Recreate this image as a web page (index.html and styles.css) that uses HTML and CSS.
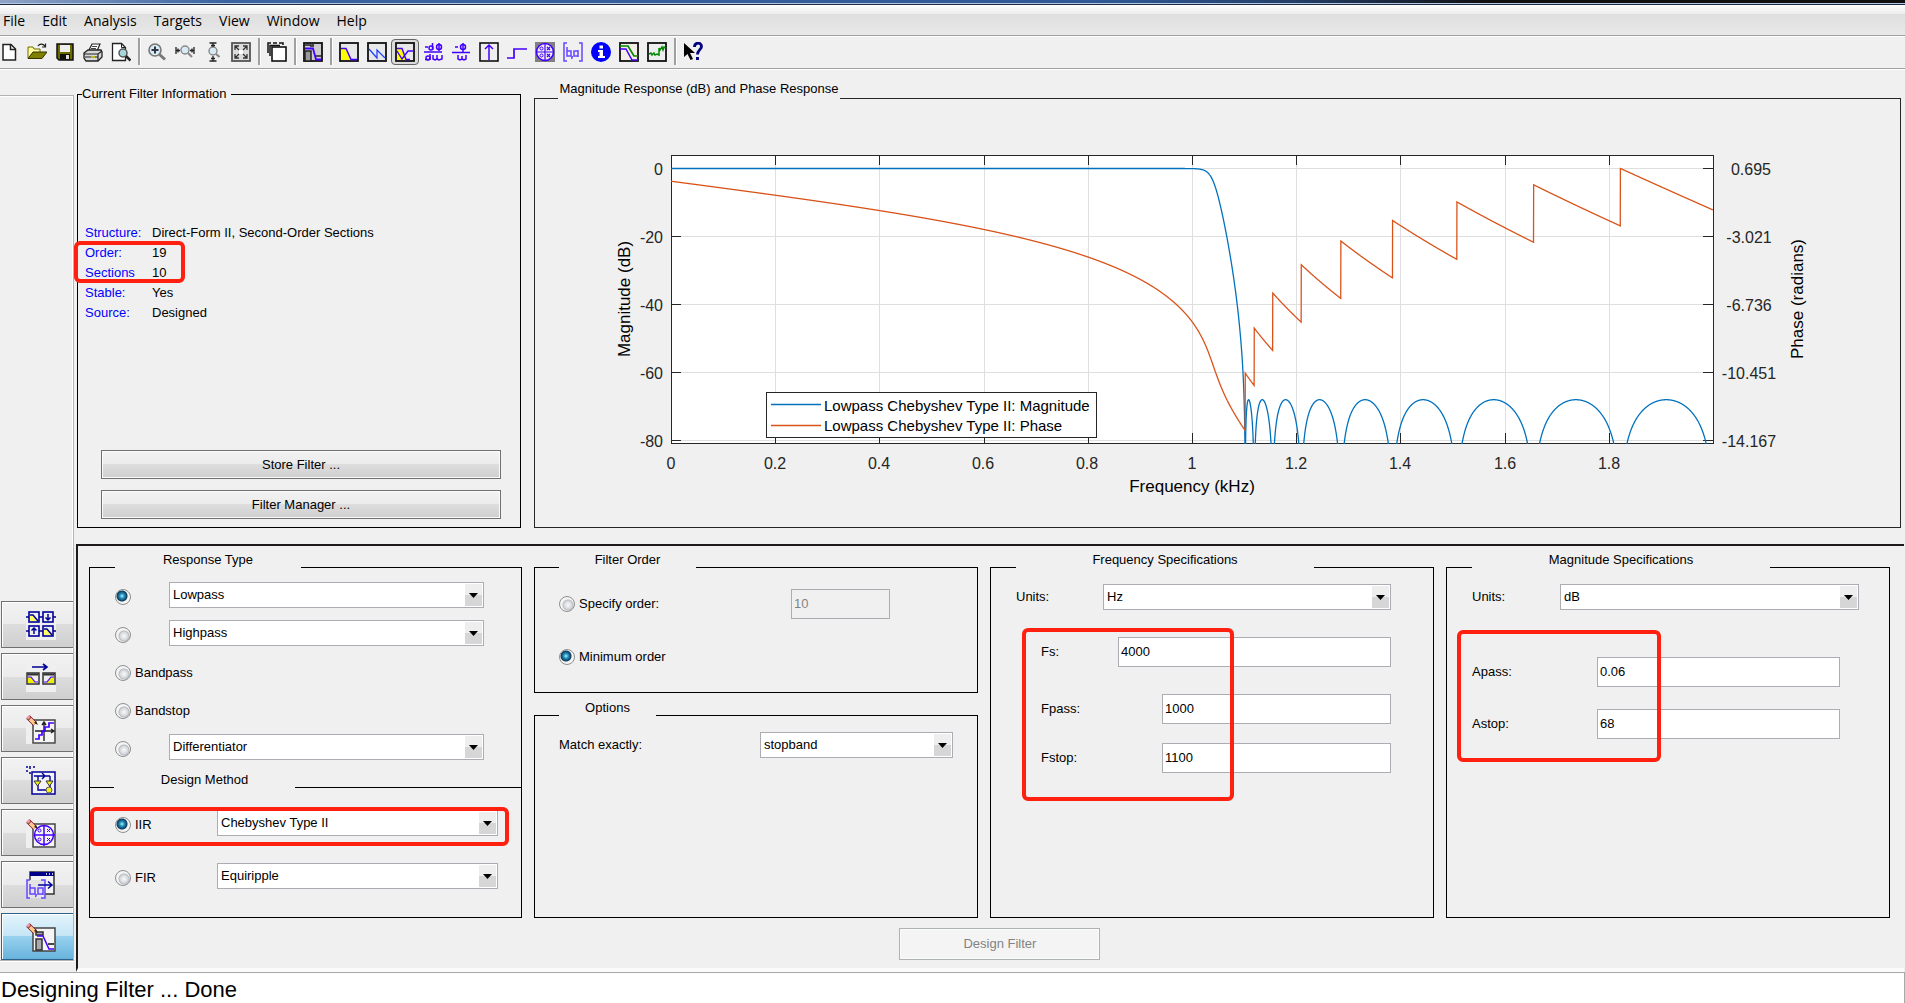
FILE: index.html
```html
<!DOCTYPE html>
<html lang="en">
<head>
<meta charset="utf-8">
<title>Filter Designer</title>
<link rel="stylesheet" href="styles.css">
</head>
<body>
<div class="titlebar"></div>
<nav class="menubar">
  <a href="#">File</a><a href="#">Edit</a><a href="#">Analysis</a><a href="#">Targets</a><a href="#">View</a><a href="#">Window</a><a href="#">Help</a>
</nav>
<div class="toolbar" role="toolbar">
  <button class="tool" aria-label="New"><svg viewBox="0 0 20 20"><path d="M4 2.500h8l4.500 4.500v11h-12.500z" fill="#fff" stroke="#222" stroke-width="1.500"/><path d="M11.500 2.500v5h5" fill="none" stroke="#222" stroke-width="1.500"/></svg></button>
  <button class="tool" aria-label="Open"><svg viewBox="0 0 20 20"><path d="M1 16V5h5l1 2h6v4" fill="#ffffa0" stroke="#6b6b00"/><path d="M1 16.500L6 10h14l-5 6.500z" fill="#808000" stroke="#333300"/><path d="M11 4c2-3 5-2 7 0M18.500 1.500v3.500H15" fill="none" stroke="#222" stroke-width="1.200"/></svg></button>
  <button class="tool" aria-label="Save"><svg viewBox="0 0 20 20"><path d="M2 2h16v16H4l-2-2z" fill="#6b6b00" stroke="#111" stroke-width="1.500"/><rect x="5" y="3" width="10" height="7" fill="#eee"/><rect x="5" y="12" width="10" height="6" fill="#111"/><rect x="11" y="13" width="3" height="4" fill="#ddd"/></svg></button>
  <button class="tool" aria-label="Print"><svg viewBox="0 0 20 20"><path d="M6 8l3-6h8l-3 7" fill="#fff" stroke="#222" stroke-width="1.200"/><path d="M9 4.500h5M8 6.500h5" stroke="#444"/><path d="M1 11l4-3h13l1 2v5l-4 4H3l-2-3z" fill="#d8d8d8" stroke="#222" stroke-width="1.300"/><path d="M1 12h14l4-3M2 15h13M15 12v7" fill="none" stroke="#222" stroke-width="1.200"/><path d="M8 15h4" stroke="#cc0" stroke-width="1.500"/></svg></button>
  <button class="tool" aria-label="Print preview"><svg viewBox="0 0 20 20"><path d="M1.500 1.500h9l4 4v13h-13z" fill="#fff" stroke="#222" stroke-width="1.300"/><path d="M10.500 1.500v4h4" fill="none" stroke="#222"/><circle cx="12" cy="11" r="4" fill="#a6d6da" stroke="#555" stroke-width="1.500"/><path d="M15 14l4.500 4.500" stroke="#222" stroke-width="2.500"/></svg></button>
  <span class="sep"></span>
  <button class="tool" aria-label="Zoom in"><svg viewBox="0 0 20 20"><circle cx="8" cy="8" r="6" fill="#d7ebf5" stroke="#777" stroke-width="1.600"/><path d="M4.500 8h7M8 4.500v7" stroke="#334" stroke-width="2"/><path d="M12.500 12.500l5.500 5" stroke="#777" stroke-width="3"/></svg></button>
  <button class="tool" aria-label="Zoom X"><svg viewBox="0 0 20 20"><circle cx="10" cy="8" r="4" fill="#d7ebf5" stroke="#888" stroke-width="1.400"/><path d="M13 11l4 4" stroke="#888" stroke-width="2.200"/><path d="M1 5v7M19 5v7M1 8.500h4M15 8.500h4M3 6.500v4M17 6.500v4" stroke="#222" stroke-width="1.300"/></svg></button>
  <button class="tool" aria-label="Zoom Y"><svg viewBox="0 0 20 20"><circle cx="10" cy="9" r="4" fill="#d7ebf5" stroke="#888" stroke-width="1.400"/><path d="M13 12l3.500 3" stroke="#888" stroke-width="2.200"/><path d="M6.500 1h7M6.500 19h7M10 1v4M10 14v5M8 3.500h4M8 16.500h4" stroke="#222" stroke-width="1.300"/></svg></button>
  <button class="tool" aria-label="Full view"><svg viewBox="0 0 20 20"><rect x="1" y="1" width="18" height="18" fill="#ddd" stroke="#555" stroke-width="1.800"/><path d="M4 8V4h4M12 4h4v4M16 12v4h-4M8 16H4v-4M4 4l4 4M16 4l-4 4M16 16l-4-4M4 16l4-4" fill="none" stroke="#333" stroke-width="1.300"/><rect x="8" y="8" width="4" height="4" fill="#fff"/></svg></button>
  <span class="sep"></span>
  <button class="tool" aria-label="Full view analysis"><svg viewBox="0 0 20 20"><path d="M1 11V1h3M6 1h4M12 1h4v2M3 14V3.500h10" fill="none" stroke="#111" stroke-width="1.500"/><rect x="5" y="5" width="14" height="14" fill="#fff" stroke="#111" stroke-width="1.600"/></svg></button>
  <span class="sep"></span>
  <button class="tool" aria-label="Filter specifications"><svg viewBox="0 0 20 20"><rect x="1" y="1" width="18" height="18" fill="#ccc" stroke="#111" stroke-width="1.800"/><path d="M2 9h6v10H2z" fill="#999" stroke="#222" stroke-width="1.500"/><path d="M2 3h6v2M10 5V2M12 14h7" fill="none" stroke="#222" stroke-width="1.600"/><path d="M2 6.500h8l3 11h5" fill="none" stroke="#40f" stroke-width="1.800"/></svg></button>
  <span class="sep"></span>
  <button class="tool" aria-label="Magnitude response"><svg viewBox="0 0 20 20"><rect x="1" y="1" width="18" height="18" fill="#e8e8e8" stroke="#111" stroke-width="1.800"/><path d="M2 7h5l4 11H2z" fill="#ff0"/><path d="M2 6.500h5l5 11h6" fill="none" stroke="#40f" stroke-width="1.500"/></svg></button>
  <button class="tool" aria-label="Phase response"><svg viewBox="0 0 20 20"><rect x="1" y="1" width="18" height="18" fill="#e8e8e8" stroke="#111" stroke-width="1.800"/><path d="M2 7l8 9V8l8 8" fill="none" stroke="#24f" stroke-width="1.300"/></svg></button>
  <button class="tool pressed" aria-label="Magnitude and phase responses"><svg viewBox="0 0 20 20"><rect x="1" y="1" width="18" height="18" fill="#e8e8e8" stroke="#111" stroke-width="1.800"/><path d="M2 7h5l4 11H2z" fill="#ff0"/><path d="M2 6.500h5l4 11h4M2 9l5 8 6-8h6" fill="none" stroke="#40f" stroke-width="1.400"/></svg></button>
  <button class="tool" aria-label="Group delay"><svg viewBox="0 0 20 20"><g fill="none" stroke="#40f" stroke-width="1.500"><path d="M1 10h18M2 5h3M9.500 1v7M16 1v8M2 17.500h4M7 12v6M10 13v4l2 1 2-1v-4M14 17l2 1 3-1v-4"/><circle cx="8" cy="6" r="2"/><circle cx="16" cy="5" r="2.500"/><circle cx="5" cy="16" r="2"/></g></svg></button>
  <button class="tool" aria-label="Phase delay"><svg viewBox="0 0 20 20"><g fill="none" stroke="#40f" stroke-width="1.500"><path d="M1 10.500h18M4 5h3M12 1v9M7 13v4l2 1 2-1v-3M11 17l2 1 2-1v-4"/><circle cx="12" cy="5" r="2.500"/></g></svg></button>
  <button class="tool" aria-label="Impulse response"><svg viewBox="0 0 20 20"><rect x="1" y="1" width="18" height="18" fill="#eee" stroke="#111" stroke-width="1.600"/><path d="M10 18V3M6 7l4-4 4 4" fill="none" stroke="#40f" stroke-width="1.500"/></svg></button>
  <button class="tool" aria-label="Step response"><svg viewBox="0 0 20 20"><path d="M0 16h7V7h13" fill="none" stroke="#40f" stroke-width="1.700"/></svg></button>
  <button class="tool" aria-label="Pole-zero plot"><svg viewBox="0 0 20 20"><rect width="20" height="20" fill="#808080"/><circle cx="10" cy="10" r="8.500" fill="#eee" stroke="#40f" stroke-width="1.600"/><path d="M1 10h18M10 1v18M12 5l3 3M15 5l-3 3M12 12l3 3M15 12l-3 3" stroke="#40f" stroke-width="1.200"/><circle cx="6.500" cy="6.500" r="1.500" fill="none" stroke="#40f"/><circle cx="6.500" cy="13.500" r="1.500" fill="none" stroke="#40f"/></svg></button>
  <button class="tool" aria-label="Filter coefficients"><svg viewBox="0 0 20 20"><path d="M4 1H1v18h3M16 1h3v18h-3M4 5v9h4V9H4M15 14h-4V9h4zV8v7M9.500 14l-1 3" fill="none" stroke="#64f" stroke-width="1.500"/></svg></button>
  <button class="tool" aria-label="Filter information"><svg viewBox="0 0 20 20"><circle cx="10" cy="10" r="10" fill="#00f"/><path d="M8.500 3.500h3.500v3H8.500zM7 8h5v6h2v2H7v-2h1.500v-4H7z" fill="#fff"/></svg></button>
  <button class="tool" aria-label="Magnitude response estimate"><svg viewBox="0 0 20 20"><rect x="1" y="1" width="18" height="18" fill="#f3efe6" stroke="#111" stroke-width="1.800"/><path d="M1 4h8l6 10h4" fill="none" stroke="#080" stroke-width="1.700"/><path d="M1 7h6l6 11h6" fill="none" stroke="#40f" stroke-width="1.500"/></svg></button>
  <button class="tool" aria-label="Round-off noise"><svg viewBox="0 0 20 20"><rect x="1" y="1" width="18" height="18" fill="#eee" stroke="#111" stroke-width="1.800"/><path d="M2 12l2-1 1 2 2-2 1 2 2-1 2 1V6l1 2 2-3 1 3 1-3 2 1" fill="none" stroke="#080" stroke-width="1.500"/></svg></button>
  <span class="sep"></span>
  <button class="tool" aria-label="What's this?"><svg viewBox="0 0 20 20"><path d="M1 1v14l3.500-3 3 6 2.500-1-3-6h5z" fill="#000"/><path d="M11.500 5c0-5 7-5 7-.5 0 3-4 3.500-4 8" fill="none" stroke="#000080" stroke-width="2.800"/><rect x="13" y="15" width="3" height="3" fill="#000080"/></svg></button>
</div>

<main class="workspace">
  <aside class="sidebar">
    <button class="side" aria-label="Create a multirate filter"><svg viewBox="0 0 30 30"><rect width="30" height="30" fill="#efefef"/><path d="M0 7h30M0 21h30" stroke="#008" stroke-width="1.500"/><g fill="#efefef" stroke="#009" stroke-width="1.600"><rect x="3" y="2" width="10" height="10"/><rect x="17" y="2" width="10" height="10"/><rect x="3" y="16" width="10" height="10"/><rect x="17" y="16" width="10" height="10"/></g><path d="M4 5h3l5 6H4zM18 19h3l5 6h-8z" fill="#ff6"/><path d="M4 5h3l5 6M18 19h3l5 6M22 4v6M19.500 7.500L22 10l2.500-2.500M8 24v-6M5.500 20.500L8 18l2.500 2.500" fill="none" stroke="#009" stroke-width="1.500"/></svg></button>
    <button class="side" aria-label="Transform filter"><svg viewBox="0 0 30 30"><rect width="30" height="30" fill="#efefef"/><path d="M6 5h15M17 2l4 3-4 3" fill="none" stroke="#009" stroke-width="1.600"/><g fill="#eee" stroke="#333" stroke-width="1.500"><rect x="1" y="11" width="12" height="11"/><rect x="17" y="11" width="12" height="11"/></g><path d="M1.500 12.500h11M17.500 12.500h11" stroke="#333" stroke-width="2"/><path d="M2 15h3l4 6H2zM28 15h-3l-5 6h8z" fill="#ee0"/><path d="M2 15h3l4 5h3M28 15h-3l-4 5h-3" fill="none" stroke="#40f" stroke-width="1.200"/></svg></button>
    <button class="side" aria-label="Set quantization parameters"><svg viewBox="0 0 30 30"><rect width="30" height="30" fill="#efefef"/><rect x="7" y="6" width="22" height="23" fill="#f4f4f4" stroke="#444" stroke-width="1.500"/><path d="M9 17h18M18 9v18M16 11l2-3 2 3M25 15l3 2-3 2" fill="none" stroke="#222" stroke-width="1.400"/><path d="M9 25h4v-4h3v-4h3v-4h4V9h5" fill="none" stroke="#40f" stroke-width="1.700"/><path d="M2 3l7 7" stroke="#713" stroke-width="5"/><path d="M4 5l5 5" stroke="#fc8" stroke-width="3.500"/><path d="M1.500 2.500l2 2" stroke="#e99" stroke-width="3.500"/><path d="M8 9l4 2-2-4z" fill="#321"/></svg></button>
    <button class="side" aria-label="Realize model"><svg viewBox="0 0 30 30"><rect x="6" y="6" width="23" height="22" fill="#f4f4f4" stroke="#009" stroke-width="1.500"/><path d="M0 1h2M4 0v3M7 1h2M0 5h2M3 7h2" stroke="#009" stroke-width="1.500"/><path d="M8 10h16M12 10v14h11M24 10v13M16 7l3 3-3 3" fill="none" stroke="#009" stroke-width="1.400"/><path d="M8 15h7l-3.500 5zM20 15h7l-3.500 5z" fill="#ee2" stroke="#333"/><circle cx="23" cy="24" r="3" fill="#ee2" stroke="#555"/></svg></button>
    <button class="side" aria-label="Pole-zero editor"><svg viewBox="0 0 30 30"><rect width="30" height="30" fill="#efefef"/><rect x="7" y="6" width="22" height="23" fill="#f4f4f4" stroke="#444" stroke-width="1.500"/><circle cx="18" cy="17" r="9.500" fill="none" stroke="#40f" stroke-width="1.500"/><path d="M8 17h21M18 7v21" stroke="#40f" stroke-width="1.500"/><path d="M21 11l3 3M24 11l-3 3M21 20l3 3M24 20l-3 3" stroke="#40f"/><circle cx="13.500" cy="12.500" r="1.500" fill="none" stroke="#40f"/><circle cx="13.500" cy="21.500" r="1.500" fill="none" stroke="#40f"/><path d="M2 3l7 7" stroke="#713" stroke-width="5"/><path d="M4 5l5 5" stroke="#fc8" stroke-width="3.500"/><path d="M1.500 2.500l2 2" stroke="#e99" stroke-width="3.500"/><path d="M8 9l4 2-2-4z" fill="#321"/></svg></button>
    <button class="side" aria-label="Import filter"><svg viewBox="0 0 30 30"><rect x="4" y="2" width="24" height="22" fill="#f4f4f4" stroke="#333" stroke-width="1.500"/><path d="M4 4h24" stroke="#008" stroke-width="4"/><path d="M20 4h1M23 4h1M26 4h1" stroke="#fff" stroke-width="1.500"/><rect x="0" y="10" width="19" height="18" fill="#e4e4e4"/><path d="M4 10H1v18h3M15 10h4v18h-4M4 14v10h5v-6H4M17 24h-5v-6h5v7M10.500 24l-1 3" fill="none" stroke="#64f" stroke-width="1.500"/><path d="M12 15h14M22 11.500l4 3.500-4 3.500" fill="none" stroke="#009" stroke-width="1.500"/></svg></button>
    <button class="side active" aria-label="Design filter view"><svg viewBox="0 0 30 30"><rect x="7" y="6" width="22" height="23" fill="#f4f4f4" stroke="#444" stroke-width="1.500"/><path d="M10 17h6v11h-6zM10 10h7v3h-7z" fill="#aaa" stroke="#333" stroke-width="1.500"/><path d="M11 14h6l6 13h5" fill="none" stroke="#40f" stroke-width="1.500"/><path d="M22 22h6" stroke="#333" stroke-width="1.800"/><path d="M2 3l7 7" stroke="#713" stroke-width="5"/><path d="M4 5l5 5" stroke="#fc8" stroke-width="3.500"/><path d="M1.500 2.500l2 2" stroke="#e99" stroke-width="3.500"/><path d="M8 9l4 2-2-4z" fill="#321"/></svg></button>
  </aside>

  <div class="content">
    <div class="overview">
      <fieldset class="group info">
        <legend class="legend-info">Current Filter Information</legend>
        <div class="facts-area">
          <dl class="facts">
            <dt>Structure:</dt><dd>Direct-Form II, Second-Order Sections</dd>
            <dt>Order:</dt><dd>19</dd>
            <dt>Sections</dt><dd>10</dd>
            <dt>Stable:</dt><dd>Yes</dd>
            <dt>Source:</dt><dd>Designed</dd>
            <div class="mark mark-order"></div>
          </dl>
        </div>
        <button class="push">Store Filter ...</button>
        <button class="push">Filter Manager ...</button>
      </fieldset>

      <fieldset class="group plot">
        <legend class="legend-plot">Magnitude Response (dB) and Phase Response</legend>
        <svg class="chart" viewBox="-136 -40 1365 412" role="img" aria-label="Magnitude and phase response">
          <clipPath id="axes"><rect x="0" y="0" width="1043" height="289"/></clipPath>
          <rect width="1042" height="288" fill="#fff"/>
          <path class="grid" d="M104 0v288M208 0v288M313 0v288M417 0v288M521 0v288M625 0v288M729 0v288M834 0v288M938 0v288M0 13h1042M0 81h1042M0 149h1042M0 217h1042M0 285h1042"/>
          <path class="axis" d="M0 0h1042v288H0zM104 0v10m0 278v-10M208 0v10m0 278v-10M313 0v10m0 278v-10M417 0v10m0 278v-10M521 0v10m0 278v-10M625 0v10m0 278v-10M729 0v10m0 278v-10M834 0v10m0 278v-10M938 0v10m0 278v-10M0 13h10m1032 0h-10M0 81h10m1032 0h-10M0 149h10m1032 0h-10M0 217h10m1032 0h-10M0 285h10m1032 0h-10"/>
          <g clip-path="url(#axes)">
            <path id="magnitude" class="curve magnitude"/>
            <path id="phase" class="curve phase"/>
          </g>
          <g class="tick end"><text x="-8" y="20">0</text><text x="-8" y="88">-20</text><text x="-8" y="156">-40</text><text x="-8" y="224">-60</text><text x="-8" y="292">-80</text></g>
          <g class="tick mid"><text x="0" y="314">0</text><text x="104" y="314">0.2</text><text x="208" y="314">0.4</text><text x="312" y="314">0.6</text><text x="416" y="314">0.8</text><text x="521" y="314">1</text><text x="625" y="314">1.2</text><text x="729" y="314">1.4</text><text x="834" y="314">1.6</text><text x="938" y="314">1.8</text></g>
          <g class="tick mid"><text x="1080" y="20">0.695</text><text x="1078" y="88">-3.021</text><text x="1078" y="156">-6.736</text><text x="1078" y="224">-10.451</text><text x="1078" y="292">-14.167</text></g>
          <g class="axis-name"><text x="521" y="337">Frequency (kHz)</text><text transform="translate(-41 144) rotate(-90)">Magnitude (dB)</text><text transform="translate(1132 144) rotate(-90)">Phase (radians)</text></g>
          <rect class="key" x="95" y="237" width="330" height="45"/>
          <path class="curve magnitude" d="M100 249.500h50"/>
          <path class="curve phase" d="M100 270.500h50"/>
          <g class="key-text"><text x="153" y="256">Lowpass Chebyshev Type II: Magnitude</text><text x="153" y="276">Lowpass Chebyshev Type II: Phase</text></g>
        </svg>
      </fieldset>
    </div>

    <form class="design">
      <div class="columns">
        <fieldset class="group response">
          <legend>Response Type</legend>
          <div class="options">
            <div class="option"><label><input type="radio" name="type" checked aria-label="Lowpass type"></label><select aria-label="Lowpass"><option>Lowpass</option></select></div>
            <div class="option"><label><input type="radio" name="type" aria-label="Highpass type"></label><select aria-label="Highpass"><option>Highpass</option></select></div>
            <div class="option"><label><input type="radio" name="type">Bandpass</label></div>
            <div class="option"><label><input type="radio" name="type">Bandstop</label></div>
            <div class="option"><label><input type="radio" name="type" aria-label="Differentiator type"></label><select aria-label="Other type"><option>Differentiator</option></select></div>
          </div>
          <fieldset class="method">
            <legend>Design Method</legend>
            <div class="methods">
              <div class="option"><label><input type="radio" name="method" checked>IIR</label><select aria-label="IIR method"><option>Chebyshev Type II</option></select></div>
              <div class="option"><label><input type="radio" name="method">FIR</label><select aria-label="FIR method"><option>Equiripple</option></select></div>
            </div>
            <div class="mark mark-iir"></div>
          </fieldset>
        </fieldset>

        <div class="stack">
          <fieldset class="group order">
            <legend>Filter Order</legend>
            <div class="field"><label><input type="radio" name="order">Specify order:</label><input type="text" value="10" disabled aria-label="Order"></div>
            <div class="field"><label><input type="radio" name="order" checked>Minimum order</label></div>
          </fieldset>
          <fieldset class="group extras">
            <legend>Options</legend>
            <div class="field"><label for="match">Match exactly:</label><select id="match"><option>stopband</option></select></div>
          </fieldset>
        </div>

        <fieldset class="group frequency">
          <legend>Frequency Specifications</legend>
          <div class="field units"><label for="funits">Units:</label><select id="funits"><option>Hz</option></select></div>
          <div class="field rate"><label for="fs">Fs:</label><input type="text" id="fs" value="4000"></div>
          <div class="field edge"><label for="fpass">Fpass:</label><input type="text" id="fpass" value="1000"></div>
          <div class="field edge last"><label for="fstop">Fstop:</label><input type="text" id="fstop" value="1100"></div>
          <div class="mark mark-frequency"></div>
        </fieldset>

        <fieldset class="group magnitudes">
          <legend>Magnitude Specifications</legend>
          <div class="field units"><label for="munits">Units:</label><select id="munits"><option>dB</option></select></div>
          <div class="field ripple"><label for="apass">Apass:</label><input type="text" id="apass" value="0.06"></div>
          <div class="field ripple last"><label for="astop">Astop:</label><input type="text" id="astop" value="68"></div>
          <div class="mark mark-magnitude"></div>
        </fieldset>
      </div>
      <button class="push submit" type="button" disabled>Design Filter</button>
    </form>
  </div>
</main>
<footer class="status">Designing Filter ... Done</footer>
<script src="plot.js"></script>
</body>
</html>
```
FILE: styles.css
```css
* { box-sizing: border-box; }

body {
  margin: 0;
  min-height: 100vh;
  display: flex;
  flex-direction: column;
  background: #f0f0f0;
  color: #000;
  font: 13px/16px "Liberation Sans", Arial, sans-serif;
}

button, input, select { font: inherit; color: inherit; margin: 0; border-radius: 0; }

.titlebar {
  height: 5px;
  background:
    linear-gradient(#0000 3px, #b4c8e2 3px, #b4c8e2 4px, #1c2a44 4px),
    linear-gradient(90deg, #8fa3c6, #3a63a0 12%, #2f5894 58%, #243f68 68%, #111 78%);
}

.menubar {
  display: flex;
  align-items: center;
  gap: 17px;
  height: 31px;
  padding: 2px 0 0 3px;
  border-bottom: 1px solid #a0a0a0;
  background: linear-gradient(#fff, #ececec 9px, #dedede 9px, #e9e9e9);
}
.menubar a {
  color: #000;
  text-decoration: none;
  font: 14px/20px "Open Sans", "Noto Sans", sans-serif;
}

.toolbar {
  display: flex;
  height: 33px;
  align-items: center;
  padding: 0 0 2px;
  border-top: 1px solid #fff;
  border-bottom: 1px solid #a0a0a0;
  overflow: hidden;
}
.tool {
  flex: none;
  width: 28px;
  height: 26px;
  padding: 0;
  border: 1px solid transparent;
  border-radius: 4px;
  background: none;
  display: flex;
  align-items: center;
  justify-content: center;
}
.tool:first-child { margin-left: -5px; }
.tool svg { width: 20px; height: 20px; flex: none; }
.tool.pressed { border-color: #666; background: #dcdcdc; }
.sep { flex: none; width: 8px; height: 27px; padding-left: 3px; }
.sep::before { content: ""; display: block; width: 2px; height: 27px; background: #a0a0a0; border-right: 1px solid #fff; }

.workspace { flex: 1; display: flex; border-top: 1px solid #fff; }

.sidebar {
  flex: none;
  width: 74px;
  margin: 25px 2px 11px 0;
  padding: 0 0 0 1px;
  display: flex;
  flex-direction: column;
  justify-content: flex-end;
  gap: 5px;
  border: 1px solid #b4b4b4;
  border-left: 0;
  box-shadow: inset -1px 1px #fff, 0 1px #fff;
}
.side {
  height: 47px;
  padding: 0 0 0 6px;
  display: flex;
  align-items: center;
  justify-content: center;
  border: 1px solid #707070;
  border-right: 0;
  box-shadow: inset 1px 1px #fff;
  background: linear-gradient(#f2f2f2, #ebebeb 50%, #dddddd 50%, #cfcfcf);
}
.side svg { width: 30px; height: 30px; }
.side.active {
  border-color: #2c628b;
  background: linear-gradient(#e5f4fc, #c4e5f6 50%, #98d1ef 50%, #68b3db);
}

.content { flex: 1; min-width: 0; display: flex; flex-direction: column; }

.overview {
  display: grid;
  grid-template-columns: 444px minmax(0, 1fr);
  gap: 13px;
  padding: 11px 4px 16px 1px;
}

.group {
  position: relative;
  min-width: 0;
  margin: 0;
  padding: 0;
  border: 1px solid #000;
}
legend {
  display: flex;
  justify-content: center;
  height: 30px;
  margin-left: 25px;
  padding: 0;
  white-space: nowrap;
}

.info { margin-top: 5px; display: flex; flex-direction: column; padding: 0 19px 8px 7px; }
.legend-info { height: 16px; margin-left: -3px; width: 149px; justify-content: flex-start; }
.facts-area { flex: 1; display: flex; align-items: center; padding-bottom: 6px; }
.facts { position: relative; margin: 0; display: grid; grid-template-columns: 67px 1fr; line-height: 20px; }
.facts dt { color: #00f; }
.facts dd { margin: 0; }

.push {
  height: 29px;
  border: 1px solid #707070;
  box-shadow: inset 0 0 0 1px #fbfbfb;
  background: linear-gradient(#f2f2f2, #ebebeb 50%, #dddddd 50%, #cfcfcf);
}
.info .push { margin-left: 16px; }
.info .push + .push { margin-top: 11px; }

.plot { border-color: #262626; }
.legend-plot { height: 34px; margin-left: 23px; width: 282px; }
.chart { display: block; width: 100%; height: auto; }
.grid { stroke: #dfdfdf; shape-rendering: crispEdges; }
.axis { fill: none; stroke: #262626; shape-rendering: crispEdges; }
.curve { fill: none; stroke-width: 1.3; }
.magnitude { stroke: #0072bd; }
.phase { stroke: #d95319; }
.tick { font-size: 16px; fill: #262626; }
.end { text-anchor: end; }
.mid, .axis-name { text-anchor: middle; }
.axis-name { font-size: 17px; }
.key { fill: #fff; stroke: #262626; shape-rendering: crispEdges; }
.key-text { font-size: 15px; }

.design {
  flex: 1;
  display: flex;
  flex-direction: column;
  margin-right: 1px;
  padding: 6px 14px 8px 11px;
  border-top: 2px solid #1e1a1a;
  border-left: 2px solid #1e1a1a;
  border-bottom: 4px solid #fbfbfb;
}
.columns {
  flex: 1;
  display: grid;
  grid-template-columns: minmax(0, 433fr) repeat(3, minmax(0, 444fr));
  gap: 12px;
}

input[type="radio"] {
  appearance: none;
  flex: none;
  width: 16px;
  height: 16px;
  border: 1px solid #8e8f8f;
  border-radius: 50%;
  background: radial-gradient(circle at 8px 8px, #fafafa, #d4d7db 4px, #b8bbc0 5px, #f4f4f4 6px);
}
input[type="radio"]:checked {
  background: radial-gradient(circle at 6px 6px, #c8f0ff, #2a9cc8 2px, #0b3a5c 5px, #0000 6px), #f4f4f4;
}
input[type="text"] {
  min-width: 0;
  height: 30px;
  padding: 0 2px 2px;
  border: 1px solid #abadb3;
  background: #fff;
}
input[type="text"]:disabled { background: #f0f0f0; color: #838383; }
select {
  appearance: none;
  min-width: 0;
  height: 26px;
  padding: 0 20px 0 3px;
  border: 1px solid #abadb3;
  background: #fff url("data:image/svg+xml,%3Csvg xmlns='http://www.w3.org/2000/svg' width='17' height='22'%3E%3Crect width='17' height='11' fill='%23eee'/%3E%3Crect y='11' width='17' height='11' fill='%23d6d6d6'/%3E%3Cpath d='M4 9h9l-4.500 5z'/%3E%3C/svg%3E") no-repeat right 1px center;
}

.option { display: flex; height: 26px; }
.option label { flex: none; display: flex; align-items: center; gap: 4px; padding-top: 4px; }
.option select { flex: 1; }
.options { display: flex; flex-direction: column; gap: 12px; padding: 0 37px 0 25px; }
.options label { min-width: 54px; }
.response legend { width: 186px; }
.method {
  position: relative;
  min-width: 0;
  margin: 12px 0 0;
  padding: 0;
  border: 0;
  border-top: 1px solid #000;
}
.response .method legend { width: 181px; margin-left: 24px; }
.methods { display: flex; flex-direction: column; gap: 27px; padding: 8px 23px 27px 25px; }
.methods label { width: 102px; }

.stack { display: flex; flex-direction: column; gap: 7px; }
.field { display: flex; align-items: center; justify-content: space-between; }
.field label { display: flex; align-items: center; gap: 4px; }
.order { padding: 0 87px 20px 24px; }
.order legend { margin-left: 0; width: 137px; }
.order .field { height: 30px; margin-top: 7px; }
.order .field + .field { margin-top: 23px; }
.order input[type="text"] { width: 99px; }
.extras { flex: 1; padding: 0 24px; }
.extras legend { margin-left: 0; width: 97px; }
.extras .field { padding-top: 2px; }
.extras select { width: 193px; }

.frequency { padding: 0 42px 0 25px; }
.frequency legend, .magnitudes legend { margin-left: 0; width: 298px; }
.units { padding-top: 2px; }
.frequency .units select { width: 288px; }
.rate, .edge { margin-top: 27px; padding-left: 25px; }
.rate input { width: 273px; }
.edge input { width: 229px; }
.edge.last { margin-top: 19px; }

.magnitudes { padding: 0 30px 0 25px; }
.magnitudes .units select { width: 299px; }
.ripple { margin-top: 47px; padding-right: 19px; }
.ripple input { width: 243px; }
.ripple.last { margin-top: 22px; }

/* Red highlight frames drawn over the form */
.mark {
  position: absolute;
  border: 4px solid #ff2010;
  border-radius: 6px;
  pointer-events: none;
}
.mark-order { left: -11px; top: 18px; width: 111px; height: 42px; }
.mark-iir { left: 0; right: 12px; top: 5px; height: 39px; }
.mark-frequency { left: 31px; top: 46px; width: 212px; height: 173px; }
.mark-magnitude { left: 10px; top: 48px; width: 204px; height: 132px; }

.submit { height: 32px; width: 201px; margin: 10px 0 0 45%; }
.submit:disabled { border-color: #adb2b5; background: #f4f4f4; color: #838383; }

.status {
  height: 31px;
  padding-left: 1px;
  border-top: 1px solid #a8a8a8;
  border-right: 1px solid #a8a8a8;
  background: #fff;
  font-size: 22px;
  line-height: 34px;
}
```
FILE: plot.js
```js
// Response of the designed filter: inverse Chebyshev lowpass, bilinear transform.
const order = 19;
const sampleRate = 4;
const stopEdge = 1.1;
const stopDb = 68;

const warp = (f) => Math.tan((Math.PI * f) / sampleRate);
const ws = warp(stopEdge);
const eps = 1 / Math.sqrt(10 ** (stopDb / 10) - 1);
const a = Math.asinh(1 / eps) / order;

const poles = [];
const zeros = [];
for (let k = 1; k <= order; k++) {
  const t = ((2 * k - 1) * Math.PI) / (2 * order);
  const re = -Math.sinh(a) * Math.sin(t);
  const im = Math.cosh(a) * Math.cos(t);
  const m = re * re + im * im;
  poles.push([(ws * re) / m, (-ws * im) / m]);
  if (Math.cos(t) > 1e-9) zeros.push(ws / Math.cos(t));
}

function magnitudeDb(w) {
  const x = ws / w;
  const t = x > 1 ? Math.cosh(order * Math.acosh(x)) : Math.cos(order * Math.acos(x));
  const e = (eps * t) ** 2;
  return Number.isFinite(e) ? 10 * Math.log10(e / (1 + e) + 1e-12) : 0;
}

function phaseOf(w) {
  let p = 0;
  for (const [re, im] of poles) p -= Math.atan2(w - im, -re);
  for (const z of zeros) if (w > z) p += Math.PI;
  return p;
}

// Axes are 1042 x 288 units: 2 kHz across, 20 dB or 3.7155 rad per 68 units down.
let mag = "";
let phase = "";
for (let i = 1; i < 8000; i++) {
  const f = i / 4000;
  const w = warp(f);
  const x = (f * 521).toFixed(2);
  const c = i === 1 ? "M" : "L";
  mag += `${c}${x} ${Math.min(400, 13.5 - magnitudeDb(w) * 3.4).toFixed(2)}`;
  phase += `${c}${x} ${(13.5 + ((0.695 - phaseOf(w)) * 68) / 3.7155).toFixed(2)}`;
}
document.getElementById("magnitude").setAttribute("d", mag);
document.getElementById("phase").setAttribute("d", phase);
```
